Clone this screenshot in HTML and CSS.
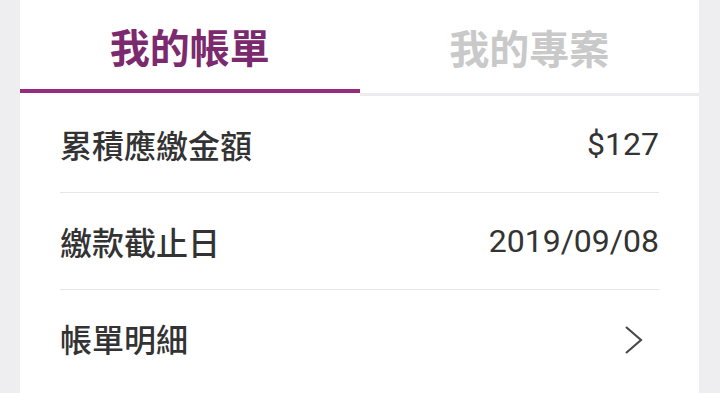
FILE: index.html
```html
<!DOCTYPE html>
<html lang="zh-Hant">
<head>
<meta charset="utf-8">
<link rel="stylesheet" href="styles.css">
</head>
<body>
<div class="card">
  <div class="tabs">
    <div class="tab active">我的帳單</div>
    <div class="tab">我的專案</div>
  </div>
  <div class="list">
    <div class="row">
      <span class="label">累積應繳金額</span>
      <span class="value">$127</span>
    </div>
    <div class="row">
      <span class="label">繳款截止日</span>
      <span class="value">2019/09/08</span>
    </div>
    <div class="row">
      <span class="label">帳單明細</span>
      <svg class="chev" width="20" height="30" viewBox="0 0 20 30"><path d="M2 2 L17 15 L2 28" fill="none" stroke="#4a4a4a" stroke-width="2.2"/></svg>
    </div>
  </div>
</div>
</body>
</html>
```

FILE: styles.css
```css
html, body {
  margin: 0;
  padding: 0;
  background: #eeeef1;
  height: 393px;
  overflow: hidden;
}
.card {
  margin: 0 21px 0 20px;
  background: #ffffff;
  height: 393px;
  font-family: "Noto Sans CJK TC", "Noto Sans", sans-serif;
}
.tabs {
  display: flex;
  align-items: flex-start;
}
.tab {
  flex: 1;
  box-sizing: border-box;
  height: 96px;
  display: flex;
  align-items: center;
  justify-content: center;
  font-size: 40px;
  font-weight: 700;
  color: #c9c9c9;
  border-bottom: 3px solid #ececee;
  padding-top: 1px;
}
.tab.active {
  height: 93px;
  margin-bottom: 3px;
  color: #7c2a6e;
  border-bottom: 4px solid #962c7d;
  padding-top: 2px;
}
.list {
  padding: 0 40px;
}
.row {
  display: flex;
  align-items: center;
  justify-content: space-between;
  height: 96px;
  border-bottom: 1px solid #e6e6e6;
}
.row:last-child {
  border-bottom: none;
}
.label {
  font-size: 32px;
  font-weight: 500;
  color: #333333;
}
.value {
  font-family: Roboto, "Noto Sans", sans-serif;
  font-size: 32px;
  color: #333333;
}
.chev {
  margin-right: 15px;
  margin-top: 4px;
}
```
